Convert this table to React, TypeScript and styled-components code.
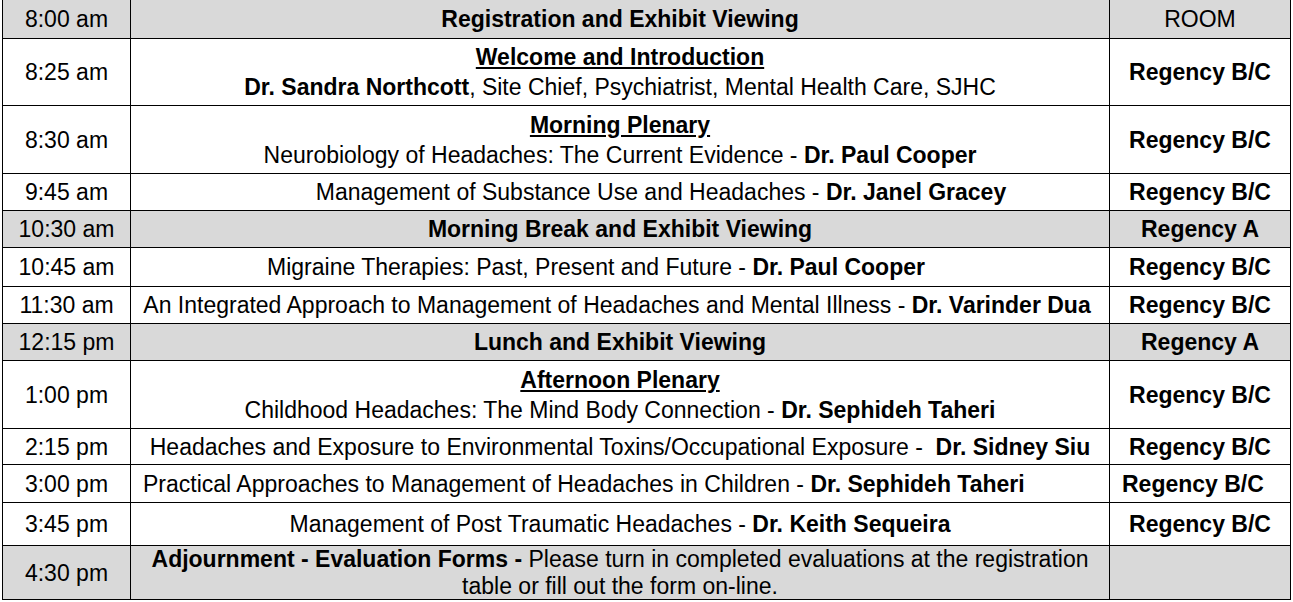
import React from "react";
import styled, { createGlobalStyle } from "styled-components";

const GlobalStyle = createGlobalStyle`
  body {
    margin: 0;
    background: #fff;
    font-family: "Liberation Sans", Arial, sans-serif;
    color: #000;
  }
`;

/* 罫線は grid の gap と黒背景で描く */
const Schedule = styled.div`
  display: grid;
  grid-template-columns: 127px 978px 180px;
  gap: 1px;
  background: #000;
  border: 1px solid #000;
  width: max-content;
  margin: -1px 0 0 2px;
  font-size: 23px;
  line-height: 26px;
`;

const Cell = styled.div<{ $h: number; $shaded?: boolean; $left?: boolean }>`
  height: ${(p) => p.$h}px;
  background: ${(p) => (p.$shaded ? "#d9d9d9" : "#fff")};
  display: flex;
  flex-direction: column;
  justify-content: center;
  align-items: ${(p) => (p.$left ? "flex-start" : "center")};
  padding: ${(p) => (p.$left ? "0 0 0 12px" : "0")};
  box-sizing: border-box;
  text-align: center;
  white-space: pre;
`;

const Room = styled.span`
  font-weight: bold;
`;

const Heading = styled.div`
  font-weight: bold;
  text-decoration: underline;
  margin-bottom: 4px;
`;

/* $shift: 中央からのずれ (元の表のまま、正なら右へ) */
const Line = styled.div<{ $lh?: number; $shift?: number }>`
  line-height: ${(p) => p.$lh ?? 26}px;
  padding-left: ${(p) => Math.max(0, (p.$shift ?? 0) * 2)}px;
  padding-right: ${(p) => Math.max(0, -(p.$shift ?? 0) * 2)}px;
`;

const B = styled.b`
  font-weight: bold;
`;

type Slot = {
  time: string;
  h: number;
  shaded?: boolean;
  left?: boolean;
  roomLeft?: boolean;
  room?: React.ReactNode;
  body: React.ReactNode;
};

const slots: Slot[] = [
  {
    time: "8:00 am",
    h: 38,
    shaded: true,
    room: <span>ROOM</span>,
    body: <B>Registration and Exhibit Viewing</B>,
  },
  {
    time: "8:25 am",
    h: 66,
    room: <Room>Regency B/C</Room>,
    body: (
      <>
        <Heading>Welcome and Introduction</Heading>
        <Line>
          <B>Dr. Sandra Northcott</B>, Site Chief, Psychiatrist, Mental Health Care, SJHC
        </Line>
      </>
    ),
  },
  {
    time: "8:30 am",
    h: 67,
    room: <Room>Regency B/C</Room>,
    body: (
      <>
        <Heading>Morning Plenary</Heading>
        <Line>
          Neurobiology of Headaches: The Current Evidence - <B>Dr. Paul Cooper</B>
        </Line>
      </>
    ),
  },
  {
    time: "9:45 am",
    h: 36,
    room: <Room>Regency B/C</Room>,
    body: (
      <Line $shift={41}>
        Management of Substance Use and Headaches - <B>Dr. Janel Gracey</B>
      </Line>
    ),
  },
  {
    time: "10:30 am",
    h: 36,
    shaded: true,
    room: <Room>Regency A</Room>,
    body: <B>Morning Break and Exhibit Viewing</B>,
  },
  {
    time: "10:45 am",
    h: 38,
    room: <Room>Regency B/C</Room>,
    body: (
      <Line $shift={-24}>
        Migraine Therapies: Past, Present and Future - <B>Dr. Paul Cooper</B>
      </Line>
    ),
  },
  {
    time: "11:30 am",
    h: 36,
    room: <Room>Regency B/C</Room>,
    body: (
      <Line $shift={-3}>
        An Integrated Approach to Management of Headaches and Mental Illness -{" "}
        <B>Dr. Varinder Dua</B>
      </Line>
    ),
  },
  {
    time: "12:15 pm",
    h: 36,
    shaded: true,
    room: <Room>Regency A</Room>,
    body: <B>Lunch and Exhibit Viewing</B>,
  },
  {
    time: "1:00 pm",
    h: 67,
    room: <Room>Regency B/C</Room>,
    body: (
      <>
        <Heading>Afternoon Plenary</Heading>
        <Line>
          Childhood Headaches: The Mind Body Connection - <B>Dr. Sephideh Taheri</B>
        </Line>
      </>
    ),
  },
  {
    time: "2:15 pm",
    h: 35,
    room: <Room>Regency B/C</Room>,
    body: (
      <Line>
        {"Headaches and Exposure to Environmental Toxins/Occupational Exposure -  "}
        <B>Dr. Sidney Siu</B>
      </Line>
    ),
  },
  {
    time: "3:00 pm",
    h: 37,
    left: true,
    roomLeft: true,
    room: <Room>Regency B/C</Room>,
    body: (
      <Line>
        Practical Approaches to Management of Headaches in Children -{" "}
        <B>Dr. Sephideh Taheri</B>
      </Line>
    ),
  },
  {
    time: "3:45 pm",
    h: 42,
    room: <Room>Regency B/C</Room>,
    body: (
      <Line>
        Management of Post Traumatic Headaches - <B>Dr. Keith Sequeira</B>
      </Line>
    ),
  },
  {
    time: "4:30 pm",
    h: 53,
    shaded: true,
    body: (
      <>
        <Line $lh={27}>
          <B>Adjournment - Evaluation Forms -</B> Please turn in completed evaluations at the
          registration
        </Line>
        <Line $lh={27}>table or fill out the form on-line.</Line>
      </>
    ),
  },
];

const App: React.FC = () => {
  return (
    <>
      <GlobalStyle />
      <Schedule>
        {slots.map((s) => (
          <React.Fragment key={s.time}>
            <Cell $h={s.h} $shaded={s.shaded}>
              {s.time}
            </Cell>
            <Cell $h={s.h} $shaded={s.shaded} $left={s.left}>
              {s.body}
            </Cell>
            <Cell $h={s.h} $shaded={s.shaded} $left={s.roomLeft}>
              {s.room}
            </Cell>
          </React.Fragment>
        ))}
      </Schedule>
    </>
  );
};

export default App;
